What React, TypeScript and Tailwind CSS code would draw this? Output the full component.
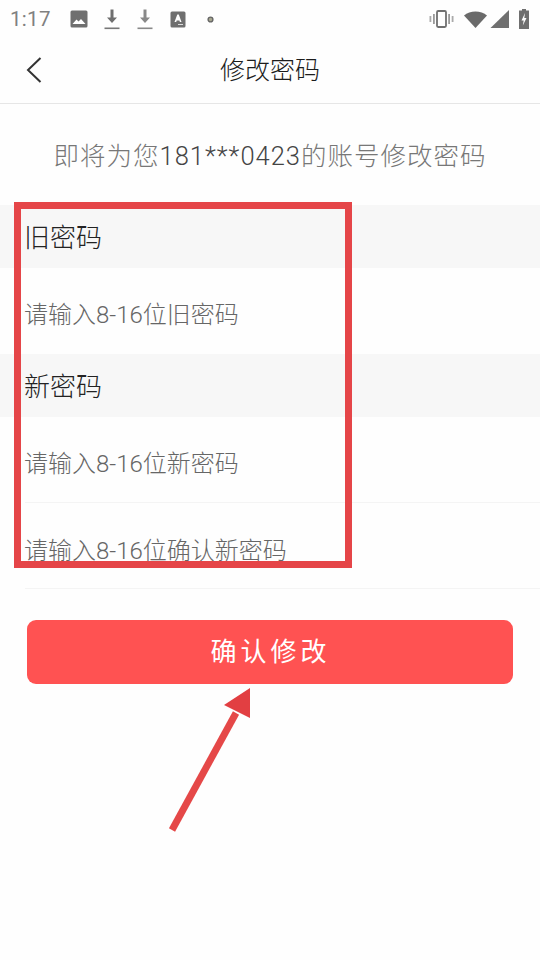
const CJK = "font-['Roboto','Noto_Sans_CJK_SC',sans-serif]";

function StatusBar() {
  return (
    <div className="h-[38px] flex items-center justify-between pl-[10px] pr-[11px] text-[#777]">
      <div className="flex items-center">
        <span className="text-[20.5px] font-normal leading-none tracking-[0.3px] w-[60px] text-[#808080]">1:17</span>
        <svg width="18" height="18" viewBox="0 0 18 18">
          <rect x="0.5" y="0.5" width="17" height="17" rx="1.5" fill="#6f6f6f" />
          <path d="M2.5 14 L6.5 9.5 L8.5 11.5 L11 9 L15.5 14 Z" fill="#fff" />
        </svg>
        <svg width="16" height="21" viewBox="0 0 16 21" className="ml-[16px]">
          <path d="M6.5 0.5 H9.5 V8.5 H13 L8 14 L3 8.5 H6.5 Z" fill="#6f6f6f" />
          <rect x="0.5" y="18.5" width="15" height="1.6" fill="#777" />
        </svg>
        <svg width="16" height="21" viewBox="0 0 16 21" className="ml-[17px]">
          <path d="M6.5 0.5 H9.5 V8.5 H13 L8 14 L3 8.5 H6.5 Z" fill="#888" />
          <rect x="0.5" y="18.5" width="15" height="1.6" fill="#888" />
        </svg>
        <svg width="16" height="17" viewBox="0 0 16 17" className="ml-[17px]">
          <rect x="0.5" y="0.5" width="15" height="16" rx="1.5" fill="#6f6f6f" />
          <path d="M4.5 11 L7.3 3.5 H8.8 L11.5 11 H9.9 L9.4 9.5 H6.7 L6.2 11 Z" fill="#fff" />
          <rect x="8" y="13" width="5" height="1" fill="#ddd" />
        </svg>
        <svg width="7" height="7" viewBox="0 0 7 7" className="ml-[21px]">
          <circle cx="3.5" cy="3.5" r="2.4" fill="#a8a890" stroke="#666" strokeWidth="1.4" />
        </svg>
      </div>
      <div className="flex items-center">
        <svg width="25" height="18" viewBox="0 0 25 18">
          <rect x="8" y="1" width="9" height="16" rx="1.2" fill="none" stroke="#707070" strokeWidth="1.8" />
          <rect x="4" y="4" width="1.8" height="10" fill="#999" />
          <rect x="0.5" y="6" width="1.8" height="6" fill="#aaa" />
          <rect x="19.2" y="4" width="1.8" height="10" fill="#999" />
          <rect x="22.7" y="6" width="1.8" height="6" fill="#aaa" />
        </svg>
        <svg width="23" height="17" viewBox="0 0 23 17" className="ml-[10px]">
          <path d="M0 4.5 C6 -1 17 -1 23 4.5 L11.5 17 Z" fill="#6a6a6a" />
        </svg>
        <svg width="19" height="18" viewBox="0 0 19 18" className="ml-[3px]">
          <path d="M0.5 18 L19 0 V18 Z" fill="#6f6f6f" />
        </svg>
        <svg width="10" height="20" viewBox="0 0 10 20" className="ml-[10px]">
          <path d="M3 0 H7 V1.5 H10 V20 H0 V1.5 H3 Z" fill="#6f6f6f" />
          <path d="M6 4 L2.5 11.5 H4.7 L3.8 16.5 L7.5 9 H5.3 Z" fill="#fff" />
        </svg>
      </div>
    </div>
  );
}

function SectionTitle({ children }: { children: string }) {
  return (
    <div className="h-[63px] bg-[#f7f7f7] flex items-center pl-[24px] pt-[3px] text-[26px] font-light leading-none text-[#222]">
      {children}
    </div>
  );
}

function InputRow({ text, line, pad }: { text: string; line?: boolean; pad: string }) {
  return (
    <div className="pl-[25px]">
      <div className={`h-[86px] flex items-center text-[24px] font-light leading-none text-[#666] ${pad} ${line ? "border-b border-[#f4f4f4]" : ""}`}>
        <span className="-ml-[1px]">{text}</span>
      </div>
    </div>
  );
}

export default function App() {
  return (
    <div className={`${CJK} relative w-[540px] h-[960px] overflow-hidden bg-[#fefefe]`}>
      <StatusBar />
      <div className="h-[66px] flex items-center justify-center relative border-b border-[#e6e6e6]">
        <svg width="18" height="28" viewBox="0 0 18 28" className="absolute left-[25px] top-[18px]">
          <path d="M15.5 2 L3 14 L15.5 26" fill="none" stroke="#333" strokeWidth="2" />
        </svg>
        <span className="text-[25px] font-light leading-none text-[#1c1c1c]">修改密码</span>
      </div>
      <div className="h-[101px] flex items-center justify-center pt-[5px] text-[25.5px] font-light leading-none tracking-[1px] text-[#777]">
        即将为您<span className="text-[#444]">181***0423</span>的账号修改密码
      </div>
      <SectionTitle>旧密码</SectionTitle>
      <InputRow text="请输入8-16位旧密码" pad="pt-[7px]" />
      <SectionTitle>新密码</SectionTitle>
      <InputRow text="请输入8-16位新密码" pad="pt-[9px]" line />
      <InputRow text="请输入8-16位确认新密码" pad="pt-[11px]" line />
      <div className="px-[27px] mt-[31px]">
        <button className="w-full h-[64px] pl-[1px] rounded-[9px] bg-[#ff5252] text-white text-[26px] font-normal leading-none tracking-[4px]">
          确认修改
        </button>
      </div>

      <div className="absolute left-[14px] top-[202px] w-[338px] h-[366px] border-[7px] border-[#e54548]" />
      <svg width="100" height="150" viewBox="0 0 100 150" className="absolute left-[160px] top-[688px]">
        <path d="M12 142 L76 25" stroke="#e54848" strokeWidth="7" fill="none" />
        <path d="M90 0 L90 30 L64 17 Z" fill="#e23f42" />
      </svg>
    </div>
  );
}
